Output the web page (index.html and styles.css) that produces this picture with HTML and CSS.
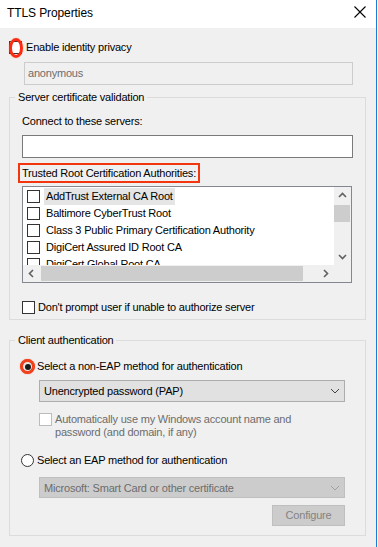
FILE: index.html
```html
<!DOCTYPE html>
<html>
<head>
<meta charset="utf-8">
<link rel="stylesheet" href="styles.css">
</head>
<body>
<div class="window">
  <div class="titlebar">
    <span class="title">TTLS Properties</span>
    <svg class="close" width="12" height="12" viewBox="0 0 12 12"><path d="M0.5 0.5 L11.5 11.5 M11.5 0.5 L0.5 11.5" stroke="#000" stroke-width="1.1" fill="none"/></svg>
  </div>
  <div class="content">
    <div class="row privacy">
      <span class="cb"></span>
      <span class="label">Enable identity privacy</span>
      <span class="anno-ellipse"></span>
    </div>
    <div class="textbox disabled">anonymous</div>

    <fieldset class="group g1">
      <legend>Server certificate validation</legend>
      <div class="inner1">
        <div class="text connect">Connect to these servers:</div>
        <div class="textbox servers"></div>
        <div class="trusted">Trusted Root Certification Authorities:</div>
        <div class="listbox">
          <div class="items">
            <div class="item"><span class="cb"></span><span class="itext sel">AddTrust External CA Root</span></div>
            <div class="item"><span class="cb"></span><span class="itext">Baltimore CyberTrust Root</span></div>
            <div class="item"><span class="cb"></span><span class="itext">Class 3 Public Primary Certification Authority</span></div>
            <div class="item"><span class="cb"></span><span class="itext">DigiCert Assured ID Root CA</span></div>
            <div class="item"><span class="cb"></span><span class="itext">DigiCert Global Root CA</span></div>
          </div>
          <div class="vscroll">
            <svg class="arr" width="17" height="17" viewBox="0 0 17 17"><path d="M5 10 L8.5 6.5 L12 10" stroke="#606060" stroke-width="1.6" fill="none"/></svg>
            <div class="vthumb"></div>
            <div class="vspace"></div>
            <svg class="arr" width="17" height="17" viewBox="0 0 17 17"><path d="M5 7 L8.5 10.5 L12 7" stroke="#606060" stroke-width="1.6" fill="none"/></svg>
          </div>
          <div class="hscroll">
            <svg class="arr" width="17" height="17" viewBox="0 0 17 17"><path d="M10 5 L6.5 8.5 L10 12" stroke="#606060" stroke-width="1.6" fill="none"/></svg>
            <div class="hthumb"></div>
            <div class="hspace"></div>
            <svg class="arr" width="17" height="17" viewBox="0 0 17 17"><path d="M7 5 L10.5 8.5 L7 12" stroke="#606060" stroke-width="1.6" fill="none"/></svg>
          </div>
          <div class="corner"></div>
        </div>
        <div class="row dont">
          <span class="cb"></span>
          <span class="label">Don't prompt user if unable to authorize server</span>
        </div>
      </div>
    </fieldset>

    <fieldset class="group g2">
      <legend>Client authentication</legend>
      <div class="inner2">
        <div class="row radio-row r1">
          <span class="radio checked"><span class="dot"></span></span>
          <span class="label">Select a non-EAP method for authentication</span>
        </div>
        <div class="select s1">
          <span>Unencrypted password (PAP)</span>
          <svg width="10" height="6" viewBox="0 0 10 6"><path d="M1 1 L5 5 L9 1" stroke="#444" stroke-width="1" fill="none"/></svg>
        </div>
        <div class="row auto">
          <span class="cb dis"></span>
          <span class="label dis">Automatically use my Windows account name and<br>password (and domain, if any)</span>
        </div>
        <div class="row radio-row r2">
          <span class="radio"></span>
          <span class="label">Select an EAP method for authentication</span>
        </div>
        <div class="select s2 dis">
          <span>Microsoft: Smart Card or other certificate</span>
          <svg width="10" height="6" viewBox="0 0 10 6"><path d="M1 1 L5 5 L9 1" stroke="#a0a0a0" stroke-width="1" fill="none"/></svg>
        </div>
        <div class="btnrow"><div class="button dis">Configure</div></div>
      </div>
    </fieldset>
  </div>
</div>
</body>
</html>
```
FILE: styles.css
```css
html, body {
  margin: 0;
  padding: 0;
  background: #ffffff;
}
body {
  width: 378px;
  height: 547px;
  overflow: hidden;
  font-family: "Liberation Sans", Arial, sans-serif;
  font-size: 11px;
  letter-spacing: -0.2px;
  color: #000;
}
.window {
  width: 376px;
  height: 547px;
  border-right: 1px solid #1c7ad8;
  background: #f0f0f0;
  display: flex;
  flex-direction: column;
}
.titlebar {
  height: 28px;
  background: #fff;
  display: flex;
  align-items: center;
  justify-content: space-between;
  padding: 0 10px 0 7px;
  flex: none;
}
.title {
  font-size: 12px;
  letter-spacing: -0.1px;
  margin-top: -2px;
}
.close {
  margin-top: -4px;
}
.content {
  padding: 0 0 0 9px;
  position: relative;
}
.row {
  display: flex;
  align-items: center;
  height: 13px;
  line-height: 13px;
  position: relative;
}
.cb {
  width: 11px;
  height: 11px;
  border: 1px solid #333;
  background: #fff;
  flex: none;
  display: inline-block;
}
.cb.dis {
  border-color: #bcbcbc;
}
.privacy {
  margin-top: 13px;
}
.privacy .label {
  margin-left: 4px;
}
.anno-ellipse {
  position: absolute;
  left: 0px;
  top: -3px;
  width: 8px;
  height: 14px;
  border: 3px solid #ff2a10;
  border-radius: 50%;
  box-shadow: 0 0 1px #ff6040;
}
.textbox {
  box-sizing: border-box;
  height: 23px;
  line-height: 21px;
  padding-left: 3px;
}
.textbox.disabled {
  margin-top: 8px;
  margin-left: 15px;
  width: 329px;
  border: 1px solid #cccccc;
  background: #f0f0f0;
  color: #6d6d6d;
}
.group {
  margin: 0;
  padding: 0;
  width: 357px;
  box-sizing: border-box;
  border: 1px solid #dcdcdc;
  min-width: 0;
}
.group legend {
  margin-left: 5px;
  padding: 0 3px;
  line-height: 14px;
  height: 14px;
}
.g1 {
  margin-top: 5px;
}
.inner1 {
  padding: 0 0 5px 12px;
}
.text {
  height: 14px;
  line-height: 14px;
}
.connect {
  margin-top: 10px;
}
.textbox.servers {
  margin-top: 7px;
  width: 331px;
  border: 1px solid #7a7a7a;
  background: #fff;
}
.trusted {
  display: inline-block;
  margin-top: 5px;
  margin-left: -4px;
  border: 2px solid #f4360e;
  padding: 1px 2px;
  line-height: 14px;
  height: 14px;
}
.listbox {
  margin-top: 3px;
  width: 330px;
  height: 97px;
  box-sizing: border-box;
  border: 1px solid #828790;
  background: #fff;
  display: grid;
  grid-template-columns: 311px 17px;
  grid-template-rows: 78px 17px;
}
.items {
  overflow: hidden;
  padding: 1px 0 0 4px;
}
.item {
  height: 17px;
  display: flex;
  align-items: center;
  white-space: nowrap;
}
.itext {
  margin-left: 4px;
  padding: 0 2px;
  height: 17px;
  line-height: 17px;
}
.itext.sel {
  background: #e5e5e5;
}
.vscroll {
  background: #f0f0f0;
  display: flex;
  flex-direction: column;
}
.vthumb {
  height: 17px;
  margin: 1px 1px 0 0;
  background: #cdcdcd;
  flex: none;
}
.vspace, .hspace {
  flex: 1;
}
.arr {
  display: block;
  flex: none;
}
.hscroll {
  background: #f0f0f0;
  display: flex;
  align-items: center;
}
.hthumb {
  width: 262px;
  height: 15px;
  margin-left: 1px;
  background: #cdcdcd;
  flex: none;
}
.corner {
  background: #f0f0f0;
}
.dont {
  margin-top: 18px;
}
.dont .label {
  margin-left: 3px;
}
.g2 {
  margin-top: 13px;
}
.inner2 {
  padding: 0 0 9px 11px;
}
.radio {
  width: 11px;
  height: 11px;
  border: 1px solid #333;
  border-radius: 50%;
  background: #fff;
  display: inline-flex;
  align-items: center;
  justify-content: center;
  flex: none;
}
.radio.checked {
  width: 9px;
  height: 9px;
  border: 3px solid #f0401c;
  background: #e8e8e8;
  box-shadow: 0 0 1px #ff5030;
  margin-left: -1px;
}
.radio .dot {
  width: 6px;
  height: 6px;
  border-radius: 50%;
  background: #1a1a1a;
}
.radio-row .label {
  margin-left: 3px;
}
.r1 {
  margin-top: 13px;
}
.r1 .label {
  margin-left: 2px;
}
.select {
  margin-top: 7px;
  margin-left: 18px;
  width: 306px;
  height: 22px;
  box-sizing: border-box;
  border: 1px solid #adadad;
  background: #e1e1e1;
  display: flex;
  align-items: center;
  justify-content: space-between;
  padding: 0 4px 0 4px;
}
.select.dis {
  margin-top: 10px;
  height: 21px;
  background: #cccccc;
  border-color: #bfbfbf;
  color: #6d6d6d;
}
.auto {
  margin-top: 11px;
  margin-left: 18px;
  align-items: flex-start;
  height: auto;
}
.auto .label {
  margin-left: 3px;
  line-height: 13px;
}
.dis {
  color: #6d6d6d;
}
.r2 {
  margin-top: 15px;
}
.btnrow {
  display: flex;
  justify-content: flex-end;
  width: 324px;
  margin-top: 7px;
}
.button {
  width: 73px;
  height: 21px;
  box-sizing: border-box;
  border: 1px solid #bfbfbf;
  background: #cccccc;
  color: #838383;
  text-align: center;
  line-height: 19px;
}
```
